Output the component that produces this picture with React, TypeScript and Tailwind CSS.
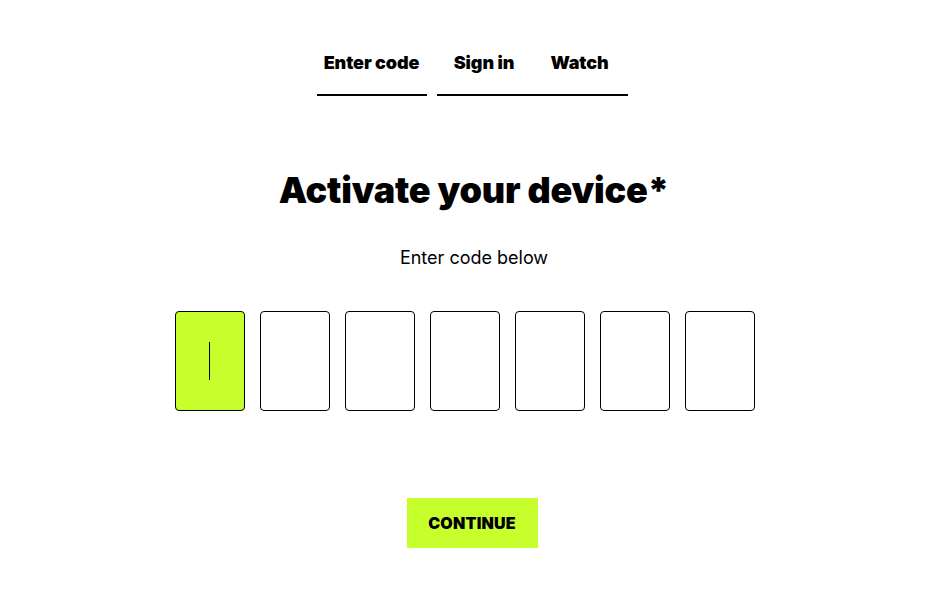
import { useState } from "react"

const tabs = [
  { label: "Enter code", width: "w-[110px]", mr: "mr-[10px]" },
  { label: "Sign in", width: "w-[95px]", mr: "" },
  { label: "Watch", width: "w-[96px]", mr: "" },
]

export default function App() {
  const [code] = useState(["", "", "", "", "", "", ""])

  return (
    <div className="min-h-screen bg-white text-black font-['Inter','Liberation_Sans',sans-serif] flex flex-col items-center">
      <nav className="flex mt-[46px] -ml-[4px]">
        {tabs.map((tab) => (
          <div
            key={tab.label}
            className={`${tab.width} ${tab.mr} h-[50px] flex justify-center border-b-2 border-black pt-[3px]`}
          >
            <span className="text-[18px] font-black tracking-[-0.1px] leading-[28px]">{tab.label}</span>
          </div>
        ))}
      </nav>

      <h1 className="mt-[72px] text-[36px] leading-[44px] font-black tracking-[-0.2px]">Activate your device*</h1>
      <p className="mt-[33px] text-[18px] leading-[26px]">Enter code below</p>

      <div className="flex mt-[40px] -ml-[4px]">
        {code.map((value, i) => (
          <div
            key={i}
            className={`w-[70px] h-[100px] mr-[15px] rounded-[4px] border border-black flex items-center justify-center ${
              i === 0 ? "bg-[#c6ff2b]" : "bg-white"
            }`}
          >
            {i === 0 && !value && <div className="w-px h-[38px] bg-black" />}
          </div>
        ))}
      </div>

      <button className="mt-[87px] -ml-[4px] w-[131px] h-[50px] bg-[#c6ff2b] text-[16px] font-black tracking-[0.2px]">
        CONTINUE
      </button>
    </div>
  )
}
